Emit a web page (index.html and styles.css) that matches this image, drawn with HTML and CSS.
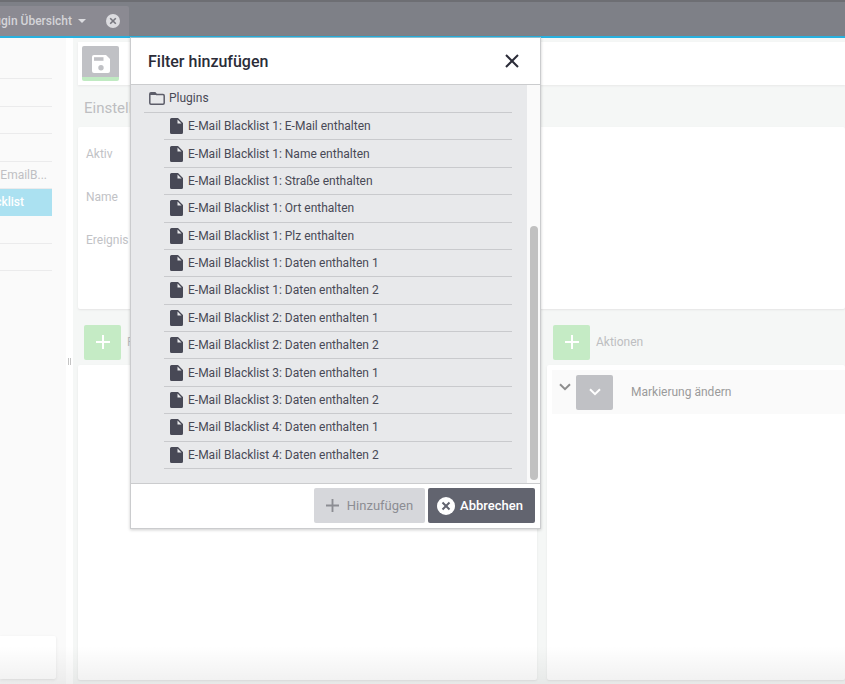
FILE: index.html
```html
<!DOCTYPE html>
<html lang="de">

<head>
    <title>Plugin Übersicht</title>
    <meta charset="UTF-8">
    <meta name="viewport" content="width=device-width, initial-scale=1.0">
    <link rel="stylesheet" href="styles.css">
</head>

<body>
    <!-- icons -->
    <svg class="sprite" aria-hidden="true">
        <symbol id="icon-file" viewBox="0 0 13 16">
            <path d="M1.500 0H8l5 5v9.500a1.500 1.500 0 0 1-1.500 1.500h-10A1.500 1.500 0 0 1 0 14.500v-13A1.500 1.500 0 0 1 1.500 0z" fill="#484956"/>
            <path d="M7.500 1.500v4h4z" fill="#e8e9eb"/>
        </symbol>
        <symbol id="icon-plus" viewBox="0 0 14 14">
            <path d="M7 0v14M0 7h14" stroke="currentColor" stroke-width="2"/>
        </symbol>
        <symbol id="icon-down" viewBox="0 0 12 8">
            <path d="M1 1.200l5 5 5-5" fill="none" stroke="currentColor" stroke-width="2"/>
        </symbol>
    </svg>

    <header class="topbar">
        <div class="tab">
            <span>Plugin Übersicht</span>
            <svg class="caret" width="8" height="4" viewBox="0 0 8 4"><path d="M0 0h8L4 4z" fill="#dcdce0"/></svg>
            <button class="tab-close" aria-label="Tab schließen">
                <svg width="14" height="14" viewBox="0 0 14 14"><circle cx="7" cy="7" r="7" fill="#dcdce0"/><path d="M4.200 4.200l5.600 5.600M9.800 4.200l-5.600 5.600" stroke="#77777f" stroke-width="1.600"/></svg>
            </button>
        </div>
    </header>

    <div class="main">
        <nav class="sidebar">
            <ul class="tree">
                <li></li>
                <li></li>
                <li></li>
                <li></li>
                <li><a href="#">EmailB...</a></li>
                <li class="active"><a href="#">Blacklist</a></li>
                <li></li>
                <li></li>
            </ul>
            <div class="sidebar-footer"></div>
        </nav>
        <div class="splitter"><i></i></div>

        <main class="editor">
            <div class="toolbar">
                <button class="square save" aria-label="Speichern">
                    <svg width="18" height="18" viewBox="0 0 18 18"><path d="M2 0h12l4 4v12a2 2 0 0 1-2 2H2a2 2 0 0 1-2-2V2a2 2 0 0 1 2-2z" fill="#fff"/><path d="M2 2.200h9.500v3.600H2z" fill="#c0c1c5"/><circle cx="9" cy="12.800" r="2.700" fill="#c0c1c5"/></svg>
                </button>
            </div>
            <h2 class="headline">Einstellungen</h2>
            <div class="panel settings">
                <div>Aktiv</div>
                <div>Name</div>
                <div>Ereignis</div>
            </div>
            <div class="columns">
                <section class="column">
                    <div class="column-head">
                        <button class="square add" aria-label="Filter hinzufügen"><svg width="14" height="14"><use href="#icon-plus"/></svg></button>
                        <span>Filter</span>
                    </div>
                    <div class="panel"></div>
                </section>
                <section class="column">
                    <div class="column-head">
                        <button class="square add" aria-label="Aktion hinzufügen"><svg width="14" height="14"><use href="#icon-plus"/></svg></button>
                        <span>Aktionen</span>
                    </div>
                    <div class="panel">
                        <div class="action">
                            <svg class="toggle" width="12" height="8"><use href="#icon-down"/></svg>
                            <button class="square" aria-label="Menü"><svg width="12" height="8"><use href="#icon-down"/></svg></button>
                            <span>Markierung ändern</span>
                        </div>
                    </div>
                </section>
            </div>
        </main>
    </div>

    <div class="modal" role="dialog" aria-labelledby="modal-title">
        <div class="modal-head">
            <h1 id="modal-title">Filter hinzufügen</h1>
            <button class="modal-close" aria-label="Schließen">
                <svg width="14" height="14" viewBox="0 0 14 14"><path d="M1 1l12 12M13 1L1 13" stroke="#2b2c38" stroke-width="2"/></svg>
            </button>
        </div>
        <div class="modal-body">
            <div class="modal-list">
                <div class="folder">
                    <svg width="16" height="13" viewBox="0 0 16 13"><path d="M.8 11V2Q.8.800 2 .8h4l1.500 1.700H14q1.200 0 1.200 1.200V11q0 1.200-1.200 1.200H2Q.8 12.200.8 11z" fill="none" stroke="#5c5d69" stroke-width="1.500"/><path d="M1 1h5.500l1.500 2H1z" fill="#5c5d69"/></svg>
                    <span>Plugins</span>
                </div>
                <ul class="filters">
                    <li><svg><use href="#icon-file"/></svg>E-Mail Blacklist 1: E-Mail enthalten</li>
                    <li><svg><use href="#icon-file"/></svg>E-Mail Blacklist 1: Name enthalten</li>
                    <li><svg><use href="#icon-file"/></svg>E-Mail Blacklist 1: Straße enthalten</li>
                    <li><svg><use href="#icon-file"/></svg>E-Mail Blacklist 1: Ort enthalten</li>
                    <li><svg><use href="#icon-file"/></svg>E-Mail Blacklist 1: Plz enthalten</li>
                    <li><svg><use href="#icon-file"/></svg>E-Mail Blacklist 1: Daten enthalten 1</li>
                    <li><svg><use href="#icon-file"/></svg>E-Mail Blacklist 1: Daten enthalten 2</li>
                    <li><svg><use href="#icon-file"/></svg>E-Mail Blacklist 2: Daten enthalten 1</li>
                    <li><svg><use href="#icon-file"/></svg>E-Mail Blacklist 2: Daten enthalten 2</li>
                    <li><svg><use href="#icon-file"/></svg>E-Mail Blacklist 3: Daten enthalten 1</li>
                    <li><svg><use href="#icon-file"/></svg>E-Mail Blacklist 3: Daten enthalten 2</li>
                    <li><svg><use href="#icon-file"/></svg>E-Mail Blacklist 4: Daten enthalten 1</li>
                    <li><svg><use href="#icon-file"/></svg>E-Mail Blacklist 4: Daten enthalten 2</li>
                </ul>
            </div>
            <div class="scrollbar"><div class="thumb"></div></div>
        </div>
        <div class="modal-foot">
            <button class="btn" disabled><svg width="13" height="13"><use href="#icon-plus"/></svg>Hinzufügen</button>
            <button class="btn btn-dark">
                <svg width="18" height="18" viewBox="0 0 18 18"><circle cx="9" cy="9" r="9" fill="#fff"/><path d="M5.500 5.500l7 7M12.500 5.500l-7 7" stroke="#62646f" stroke-width="2"/></svg>Abbrechen
            </button>
        </div>
    </div>
</body>

</html>
```
FILE: styles.css
```css
* {
    box-sizing: border-box;
    margin: 0;
    padding: 0;
}

body {
    display: flex;
    flex-direction: column;
    height: 100vh;
    overflow: hidden;
    font-family: Roboto, "Liberation Sans", sans-serif;
    font-size: 12px;
    color: #484956;
    background: #fff;
}

button {
    border: 0;
    font-family: inherit;
    cursor: pointer;
}

ul {
    list-style: none;
}

a {
    color: inherit;
    text-decoration: none;
}

svg {
    display: block;
    flex: none;
}

.sprite {
    display: none;
}

/* top bar */
.topbar {
    flex: none;
    display: flex;
    align-items: flex-end;
    height: 38px;
    background: #7e8087;
    border-top: 2px solid #6d6e73;
    border-bottom: 2px solid #29b1df;
}

.tab {
    display: flex;
    align-items: center;
    justify-content: flex-end;
    width: 129px;
    height: 30px;
    padding-right: 9px;
    overflow: hidden;
    white-space: nowrap;
    font-weight: 500;
    color: #d4d4d8;
    background: #8b8a92;
    border-radius: 0 2px 0 0;
}

.caret {
    margin: 0 20px 0 6px;
}

.tab-close {
    background: none;
}

/* page */
.main {
    flex: 1;
    display: flex;
    min-height: 0;
}

.sidebar {
    flex: none;
    display: flex;
    flex-direction: column;
    justify-content: space-between;
    width: 66px;
    padding: 14px 0 5px;
    background: #fafafa;
}

.tree {
    display: grid;
    grid-auto-rows: 1fr;
    width: 52px;
    height: 219px;
    color: #bfbfc3;
}

.tree li {
    display: flex;
    align-items: center;
    justify-content: flex-end;
    padding-right: 5px;
    overflow: hidden;
    border-bottom: 1px solid #ebebec;
}

.tree .active {
    padding-right: 28px;
    font-weight: 500;
    color: #fff;
    background: #abe1f1;
    border-color: #abe1f1;
}

.sidebar-footer {
    width: 56px;
    height: 43px;
    background: #fff;
    border-radius: 0 2px 2px 0;
    box-shadow: 0 1px 3px #e4e4e4;
}

.splitter {
    flex: none;
    display: flex;
    align-items: center;
    justify-content: center;
    width: 7px;
}

.splitter i {
    width: 3px;
    height: 7px;
    border: solid #c4c4c4;
    border-width: 0 1px;
}

.editor {
    flex: 1;
    display: flex;
    flex-direction: column;
    min-width: 0;
    padding: 4px 0 4px 5px;
    background: #f5f7f6;
}

.toolbar {
    height: 43px;
    padding: 4px;
    background: #fff;
    box-shadow: 0 1px 2px #e8e8e8;
}

.square {
    flex: none;
    display: flex;
    align-items: center;
    justify-content: center;
    width: 37px;
    height: 35px;
    color: #fff;
    background: #c0c1c5;
    border-radius: 2px;
}

.save {
    padding-top: 4px;
    border-bottom: 4px solid #c0eac2;
}

.add {
    background: #c5ebc5;
}

.headline {
    height: 42px;
    padding-left: 6px;
    font-size: 15px;
    font-weight: 400;
    line-height: 46px;
    color: #bdbec1;
}

.panel {
    background: #fff;
    border-radius: 2px;
    box-shadow: 0 1px 2px #e4e4e4;
}

.settings {
    height: 182px;
    padding: 6px 8px;
    line-height: 43px;
    color: #c1c2c6;
}

.columns {
    flex: 1;
    display: grid;
    grid-template-columns: 459px 1fr;
    gap: 10px;
    min-height: 0;
}

.column {
    display: flex;
    flex-direction: column;
}

.column-head {
    display: flex;
    align-items: center;
    gap: 6px;
    height: 56px;
    padding: 10px 6px 0;
    color: #bdbec1;
}

.column .panel {
    flex: 1;
    padding-top: 5px;
}

.action {
    display: flex;
    align-items: center;
    height: 44px;
    margin-left: 5px;
    padding-left: 7px;
    color: #9a9a9a;
    background: #fafafa;
}

.toggle {
    margin: 0 5px 10px 0;
    color: #8e8e8e;
}

.action span {
    margin-left: 18px;
}

/* shade over the lower edge */
.main::after {
    content: "";
    position: absolute;
    left: 0;
    right: 0;
    bottom: 0;
    height: 38px;
    background: linear-gradient(rgba(0, 0, 0, 0), rgba(0, 0, 0, .06));
    pointer-events: none;
}

/* dialog */
.modal {
    position: absolute;
    top: 37px;
    left: 130px;
    width: 411px;
    background: #fff;
    border: 1px solid #cbccce;
    box-shadow: 0 1px 3px rgba(0, 0, 0, .2);
    border-top-color: #8fbccb;
}

.modal-head {
    display: flex;
    align-items: center;
    justify-content: space-between;
    height: 47px;
    padding: 0 21px 0 17px;
    border-bottom: 1px solid #cbccce;
}

.modal-head h1 {
    font-size: 16px;
    font-weight: 500;
    color: #2b2c38;
}

.modal-close {
    background: none;
}

.modal-body {
    display: flex;
    background: #e8e9eb;
    border-bottom: 1px solid #cbccce;
}

.modal-list {
    flex: 1;
    padding: 0 15px 14px 13px;
}

.folder {
    display: flex;
    align-items: center;
    gap: 4px;
    height: 28px;
    padding: 0 0 1px 5px;
    border-bottom: 1px solid #c9cacd;
}

.filters {
    display: grid;
    grid-auto-rows: 1fr;
    height: 356px;
    margin-left: 20px;
}

.filters li {
    display: flex;
    align-items: center;
    gap: 5px;
    padding-left: 6px;
    border-bottom: 1px solid #c9cacd;
}

.filters svg {
    width: 13px;
    height: 16px;
}

.scrollbar {
    display: flex;
    align-items: flex-end;
    justify-content: center;
    width: 13px;
    padding-bottom: 3px;
    background: #fafafa;
}

.thumb {
    width: 8px;
    height: 254px;
    background: #c1c1c1;
    border-radius: 4px;
}

.modal-foot {
    display: flex;
    justify-content: flex-end;
    gap: 3px;
    padding: 4px 5px 5px;
}

.btn {
    display: flex;
    align-items: center;
    gap: 8px;
    height: 35px;
    padding: 0 12px;
    font-size: 13px;
    color: #8c8d93;
    background: #d6d7db;
    border-radius: 2px;
}

.btn-dark {
    gap: 5px;
    padding: 0 12px 0 9px;
    font-weight: 500;
    color: #fff;
    background: #62646f;
}
```
